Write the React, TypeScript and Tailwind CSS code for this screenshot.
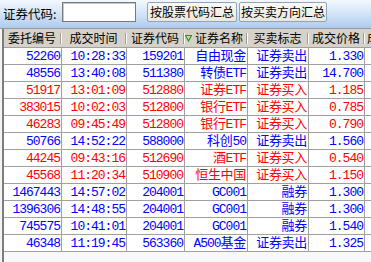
const rows = [
  ['52260', '10:28:33', '159201', '自由现金', '证券卖出', '1.330', 'b'],
  ['48556', '13:40:08', '511380', '转债ETF', '证券卖出', '14.700', 'b'],
  ['51917', '13:01:09', '512880', '证券ETF', '证券买入', '1.185', 'r'],
  ['383015', '10:02:03', '512800', '银行ETF', '证券买入', '0.785', 'r'],
  ['46283', '09:45:49', '512800', '银行ETF', '证券买入', '0.790', 'r'],
  ['50766', '14:52:22', '588000', '科创50', '证券卖出', '1.560', 'b'],
  ['44245', '09:43:16', '512690', '酒ETF', '证券买入', '0.540', 'r'],
  ['45568', '11:20:34', '510900', '恒生中国', '证券买入', '1.150', 'r'],
  ['1467443', '14:57:02', '204001', 'GC001', '融券', '1.300', 'b'],
  ['1396306', '14:48:55', '204001', 'GC001', '融券', '1.300', 'b'],
  ['745575', '10:41:01', '204001', 'GC001', '融券', '1.540', 'b'],
  ['46348', '11:19:45', '563360', 'A500基金', '证券卖出', '1.325', 'b'],
]

const widths = ['w-[58px]', 'w-[65px]', 'w-[58px]', 'w-[63px]', 'w-[61px]', 'w-[56px]']
const headers = ['委托编号', '成交时间', '证券代码', '证券名称', '买卖标志', '成交价格']

const ui = { fontFamily: '"Noto Sans CJK SC", "Liberation Sans", sans-serif' }
const mono = { fontFamily: '"Liberation Mono", "Noto Sans CJK SC", monospace' }

function Sep() {
  return <span className="h-[11px] w-[2px] shrink-0 border-l border-r border-l-[#a09c94] border-r-white" />
}

// chinese runs get their own spacing so they stay full width next to the tight digits
function Cell({ text }: { text: string }) {
  const parts = text.split(/([\u4e00-\u9fff]+)/).filter(Boolean)
  return (
    <>
      {parts.map((p, k) =>
        /[\u4e00-\u9fff]/.test(p) ? (
          <span key={k} className="tracking-[-0.3px]">{p}</span>
        ) : (
          <span key={k}>{p}</span>
        )
      )}
    </>
  )
}

export default function App() {
  return (
    <div className="w-[371px] h-[262px] overflow-hidden bg-[#f4f4f4] flex flex-col" style={ui}>
      {/* toolbar */}
      <div className="h-[29px] shrink-0 flex items-center border-b border-[#9a9a9a] bg-gradient-to-b from-[#f3f8fe] via-[#d3e4f7] to-[#adcbee] text-[12px] text-black leading-none">
        <span className="ml-[3px] w-[59px] text-[12.5px]">证券代码:</span>
        <div className="w-[74px] h-[20px] mt-[-4px] bg-white border border-[#7a7a7a] shadow-[inset_1px_1px_0_#c8c8c8]" />
        <button className="ml-[11px] w-[90px] h-[20px] mt-[-4px] border border-[#8ea4bd] rounded-[2px] bg-gradient-to-b from-[#fbfaf6] to-[#ebe7dd] leading-none">
          按股票代码汇总
        </button>
        <button className="ml-[2px] w-[88px] h-[20px] mt-[-4px] border border-[#8ea4bd] rounded-[2px] bg-gradient-to-b from-[#fbfaf6] to-[#ebe7dd] leading-none">
          按买卖方向汇总
        </button>
      </div>

      <div className="ml-[2px] flex-1 flex flex-col border-l-2 border-[#7c7c7c] bg-[#f8f8f8]">
        {/* header */}
        <div className="h-[19px] shrink-0 flex bg-[#d6d2ca] border-b border-[#a0a0a0] text-[12px] text-black">
          {headers.map((h, i) => (
            <div key={h} className={`${widths[i]} shrink-0 flex items-center`}>
              {i === 3 && (
                <svg width="7" height="8" viewBox="0 0 7 8" className="shrink-0">
                  <path d="M0.5 1.5 H6.5 L3.5 7 Z" fill="none" stroke="#1f9a1f" strokeWidth="1.2" />
                </svg>
              )}
              <span className="flex-1 text-center leading-none">{h}</span>
              <Sep />
            </div>
          ))}
          <div className="flex-1 flex items-center pl-[2px] leading-none">成</div>
        </div>

        {/* rows */}
        {rows.map((r, i) => (
          <div
            key={i}
            className={`h-[17px] shrink-0 flex bg-white border-b border-[#a0a0a0] text-[13px] tracking-[-1px] leading-none ${r[6] === 'r' ? 'text-[#ff0000]' : 'text-[#0000ff]'}`}
            style={mono}
          >
            {r.slice(0, 6).map((c, j) => (
              <div key={j} className={`${widths[j]} shrink-0 flex items-center justify-end pr-[1px] border-r border-[#a0a0a0] whitespace-nowrap`}>
                <Cell text={c} />
              </div>
            ))}
            <div className="flex-1" />
          </div>
        ))}
      </div>
    </div>
  )
}
